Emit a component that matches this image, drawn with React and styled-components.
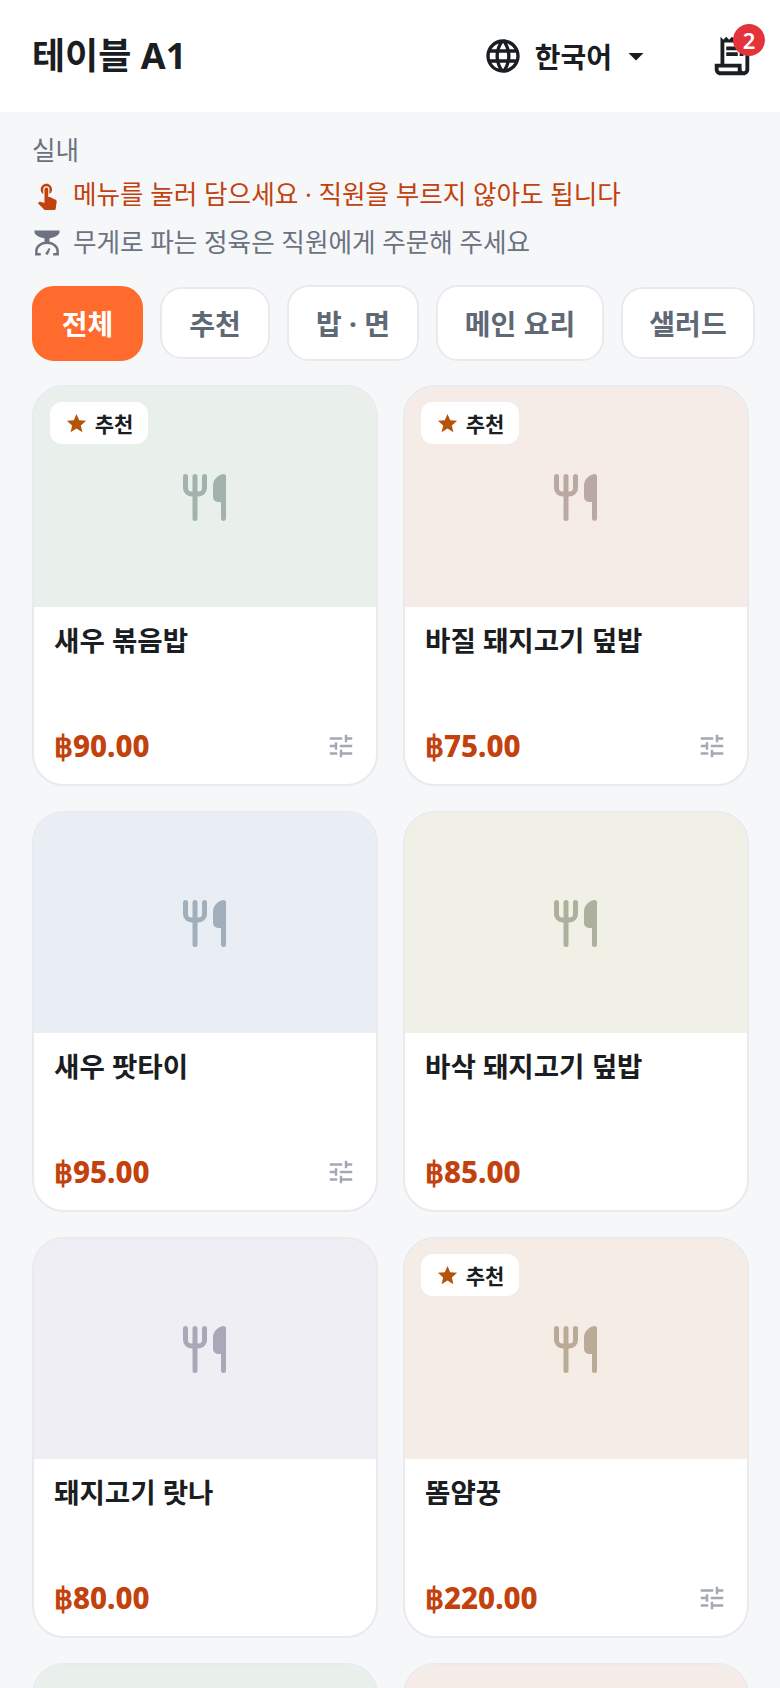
import React from "react";
import styled, { createGlobalStyle } from "styled-components";
import {
  MdLanguage,
  MdArrowDropDown,
  MdOutlineReceiptLong,
  MdTouchApp,
  MdStar,
  MdTune,
} from "react-icons/md";

const menuItems = [
  { name: "새우 볶음밥", price: "90.00", bg: "#e9efea", icon: "#a1b3ac", star: true, options: true },
  { name: "바질 돼지고기 덮밥", price: "75.00", bg: "#f5ece8", icon: "#bba8a2", star: true, options: true },
  { name: "새우 팟타이", price: "95.00", bg: "#e9edf4", icon: "#a0afbb", star: false, options: true },
  { name: "바삭 돼지고기 덮밥", price: "85.00", bg: "#f0f0e6", icon: "#adb09b", star: false, options: false },
  { name: "돼지고기 랏나", price: "80.00", bg: "#eeeef4", icon: "#a9a8b8", star: false, options: false },
  { name: "똠얌꿍", price: "220.00", bg: "#f5ede5", icon: "#b9ab98", star: true, options: true },
  { name: "", price: "", bg: "#e9efea", icon: "#a1b3ac", star: false, options: false },
  { name: "", price: "", bg: "#f5ece8", icon: "#bba8a2", star: false, options: false },
];

const categories = [
  { label: "전체", active: true, w: 111, h: 75 },
  { label: "추천", w: 110, h: 72 },
  { label: "밥 · 면", w: 132, h: 76 },
  { label: "메인 요리", w: 168, h: 76 },
  { label: "샐러드", w: 134, h: 72 },
];

const GlobalStyle = createGlobalStyle`
  html, body {
    margin: 0;
    padding: 0;
    height: 100%;
    overflow: hidden;
    background: #f5f7f9;
    font-family: "Noto Sans", "Noto Sans CJK KR", sans-serif;
  }
`;

const Page = styled.div`
  width: 780px;
  height: 1688px;
  overflow: hidden;
  background-color: #f5f7f9;
`;

const Header = styled.header`
  height: 112px;
  background: #fff;
  display: flex;
  align-items: center;
  padding: 0 25px 0 32px;
  box-sizing: border-box;
`;

const Title = styled.h1`
  margin: 0;
  flex: 1;
  font-size: 36px;
  font-weight: 700;
  color: #1a1d21;
  line-height: 1;
`;

const LangButton = styled.div`
  display: flex;
  align-items: center;
  font-size: 28px;
  font-weight: 600;
  color: #1a1d21;
  margin-right: 55px;
`;

const LangLabel = styled.span`
  margin: 0 6px 0 12px;
`;

const CartButton = styled.div`
  position: relative;
  width: 46px;
  height: 46px;
  color: #1a1d21;
`;

const CartBadge = styled.span`
  position: absolute;
  top: -9px;
  right: -10px;
  width: 32px;
  height: 32px;
  border-radius: 50%;
  background: #e5333b;
  color: #fff;
  font-size: 22px;
  font-weight: 600;
  display: flex;
  align-items: center;
  justify-content: center;
`;

const Info = styled.section`
  padding: 22px 32px 0;
`;

const AreaLabel = styled.div`
  font-size: 25.6px;
  line-height: 34px;
  color: #6b7280;
`;

const Hint = styled.div`
  display: flex;
  align-items: center;
  gap: 11px;
  font-size: 25.6px;
  line-height: 34px;
  margin-top: ${props => props.gapTop}px;
  color: ${props => props.color};
`;

const Chips = styled.nav`
  display: flex;
  align-items: center;
  gap: 17px;
  padding: 0 32px;
  height: 76px;
  margin-top: 25px;
`;

const Chip = styled.div`
  flex: none;
  box-sizing: border-box;
  border-radius: 22px;
  display: flex;
  align-items: center;
  justify-content: center;
  font-size: 28px;
  font-weight: 700;
  color: ${props => (props.active ? "#fff" : "#5f6875")};
  background: ${props => (props.active ? "#ff6b2c" : "#fff")};
  border: 2px solid ${props => (props.active ? "#ff6b2c" : "#e8eaee")};
`;

const Grid = styled.main`
  display: grid;
  grid-template-columns: 346px 346px;
  gap: 25px;
  padding: 24px 32px 0;
`;

const Card = styled.article`
  height: 401px;
  box-sizing: border-box;
  border-radius: 32px;
  border: 2px solid #e8eaee;
  background: #fff;
  overflow: hidden;
  display: flex;
  flex-direction: column;
`;

const Thumb = styled.div`
  position: relative;
  height: 220px;
  flex: none;
  display: flex;
  align-items: center;
  justify-content: center;
  background: ${props => props.bg};
  color: ${props => props.tint};
`;

const Badge = styled.span`
  position: absolute;
  top: 15px;
  left: 16px;
  width: 98px;
  height: 42px;
  border-radius: 12px;
  background: #fff;
  display: flex;
  align-items: center;
  justify-content: center;
  gap: 7px;
  font-size: 21px;
  font-weight: 700;
  color: #1a1d21;
`;

const StarIcon = styled(MdStar)`
  color: #b45309;
  font-size: 23px;
`;

const Body = styled.div`
  flex: 1;
  display: flex;
  flex-direction: column;
  justify-content: space-between;
  padding: 14px 20px 18px;
`;

const Name = styled.div`
  font-size: 27.6px;
  font-weight: 600;
  line-height: 38px;
  color: #1a1d21;
`;

const Bottom = styled.div`
  display: flex;
  align-items: center;
  justify-content: space-between;
`;

const Price = styled.div`
  font-family: "Noto Sans", sans-serif;
  font-size: 29.5px;
  font-weight: 800;
  line-height: 40px;
  color: #c2410c;
`;

const TuneIcon = styled(MdTune)`
  font-size: 30px;
  color: #a4a8b2;
`;

function Cutlery() {
  return (
    <svg width="44" height="47" viewBox="0 0 44 47" aria-hidden="true">
      <path
        d="M2.5 2.5V14a6 6 0 0 0 6 6h7a6 6 0 0 0 6-6V2.5M12 2.5V44.5"
        fill="none"
        stroke="currentColor"
        strokeWidth="5"
        strokeLinecap="round"
      />
      <path
        d="M40.5 0a2.5 2.5 0 0 1 2.5 2.5v42a2.5 2.5 0 0 1-5 0V28h-3a5 5 0 0 1-5-5V12C30 6 34 1 40.5 0z"
        fill="currentColor"
      />
    </svg>
  );
}

function ScaleIcon() {
  return (
    <svg width="30" height="30" viewBox="0 0 24 24" fill="currentColor" aria-hidden="true">
      <path d="M2 2h20v1.5c-.5 2.5-4.5 4-8 4.7V11c3.7.5 7.5 3.4 7.5 7.5V22H17v-2h2.5v-1.5c0-3-3-5.7-7.5-5.7s-7.5 2.7-7.5 5.7V20H7v2H2.5v-3.5C2.5 14.4 6.3 11.5 10 11V8.2C6.5 7.5 2.5 6 2 3.5z" />
      <path d="M10.5 20.6l3-4.6 1.2.6-2 5z" />
    </svg>
  );
}

export default function App() {
  return (
    <Page>
      <GlobalStyle />
      <Header>
        <Title>테이블 A1</Title>
        <LangButton>
          <MdLanguage size={40} />
          <LangLabel>한국어</LangLabel>
          <MdArrowDropDown size={36} />
        </LangButton>
        <CartButton>
          <MdOutlineReceiptLong size={46} />
          <CartBadge>2</CartBadge>
        </CartButton>
      </Header>
      <Info>
        <AreaLabel>실내</AreaLabel>
        <Hint color="#c2410c" gapTop={10}>
          <MdTouchApp size={30} />
          메뉴를 눌러 담으세요 · 직원을 부르지 않아도 됩니다
        </Hint>
        <Hint color="#6b7280" gapTop={14}>
          <ScaleIcon />
          무게로 파는 정육은 직원에게 주문해 주세요
        </Hint>
      </Info>
      <Chips>
        {categories.map(c => (
          <Chip key={c.label} active={c.active} style={{ width: c.w, height: c.h }}>
            {c.label}
          </Chip>
        ))}
      </Chips>
      <Grid>
        {menuItems.map((item, i) => (
          <Card key={i}>
            <Thumb bg={item.bg} tint={item.icon}>
              <Cutlery />
              {item.star && (
                <Badge>
                  <StarIcon />
                  추천
                </Badge>
              )}
            </Thumb>
            <Body>
              <Name>{item.name}</Name>
              <Bottom>
                <Price>{item.price && `฿${item.price}`}</Price>
                {item.options && <TuneIcon />}
              </Bottom>
            </Body>
          </Card>
        ))}
      </Grid>
    </Page>
  );
}
